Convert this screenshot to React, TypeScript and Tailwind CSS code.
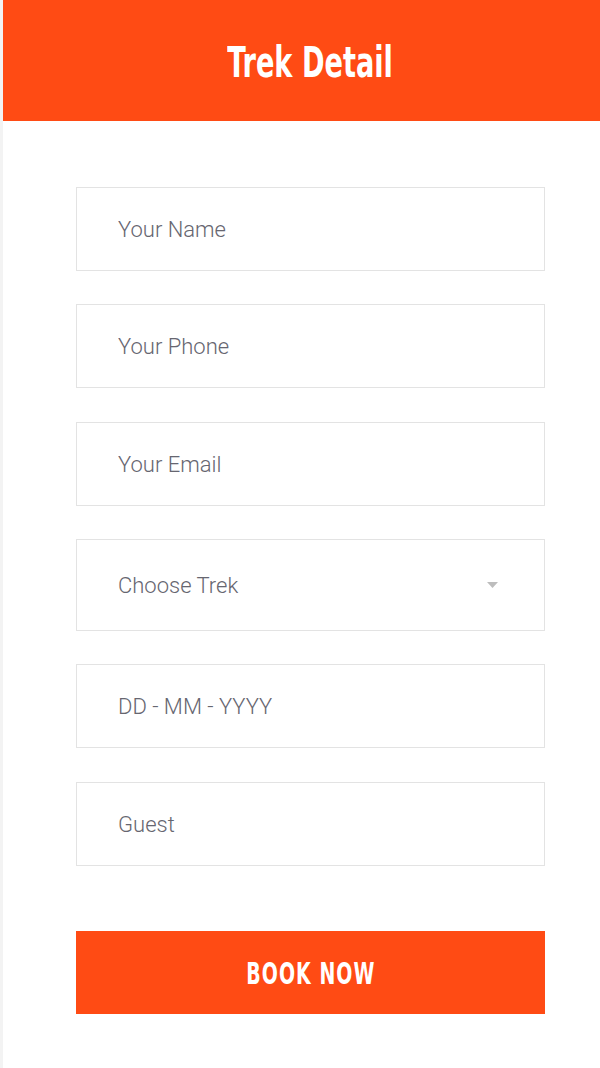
import React from 'react';

const condensed = { fontFamily: '"DejaVu Sans", sans-serif' };

function TextField({ placeholder, className = '' }: { placeholder: string; className?: string }) {
  return (
    <input
      type="text"
      placeholder={placeholder}
      className={`block w-full h-[84px] border border-[#e3e3e3] bg-white pl-[41px] pr-4 text-[22px] font-light text-[#555] placeholder:text-[#666670] outline-none font-['Roboto',sans-serif] ${className}`}
    />
  );
}

export default function App(): JSX.Element {
  return (
    <div className="flex min-h-[1068px] w-[600px] bg-[#f3f3f3]">
      <div className="ml-[3px] flex-1 bg-white">
        {/* Header */}
        <header className="flex h-[121px] items-center justify-center bg-[#ff4b14] pl-[18px] pt-[4px]">
          <h1
            className="origin-center scale-x-[0.72] text-[42px] font-bold leading-none font-stretch-condensed text-white"
            style={condensed}
          >
            Trek Detail
          </h1>
        </header>

        {/* Form */}
        <form className="ml-[73px] mt-[66px] flex w-[469px] flex-col" onSubmit={(e) => e.preventDefault()}>
          <TextField placeholder="Your Name" />
          <TextField placeholder="Your Phone" className="mt-[33px]" />
          <TextField placeholder="Your Email" className="mt-[34px]" />

          <div className="relative mt-[33px] h-[92px] border border-[#e3e3e3] bg-white">
            <span className="absolute left-[41px] top-1/2 -translate-y-1/2 text-[22px] font-light text-[#666670] font-['Roboto',sans-serif]">
              Choose Trek
            </span>
            <svg className="absolute right-[46px] top-[42px] h-[6px] w-[11px]" viewBox="0 0 11 6">
              <path d="M0 0h11L5.5 6z" fill="#bdbdbd" />
            </svg>
          </div>

          <TextField placeholder="DD - MM - YYYY" className="mt-[33px]" />
          <TextField placeholder="Guest" className="mt-[34px]" />

          <button
            type="submit"
            className="mt-[65px] flex h-[83px] w-full items-center justify-center bg-[#ff4b14] pt-[2px] text-white"
          >
            <span
              className="scale-x-[0.68] text-[31px] font-bold leading-none tracking-[1.5px] font-stretch-condensed"
              style={condensed}
            >
              BOOK NOW
            </span>
          </button>
        </form>
      </div>
    </div>
  );
}
